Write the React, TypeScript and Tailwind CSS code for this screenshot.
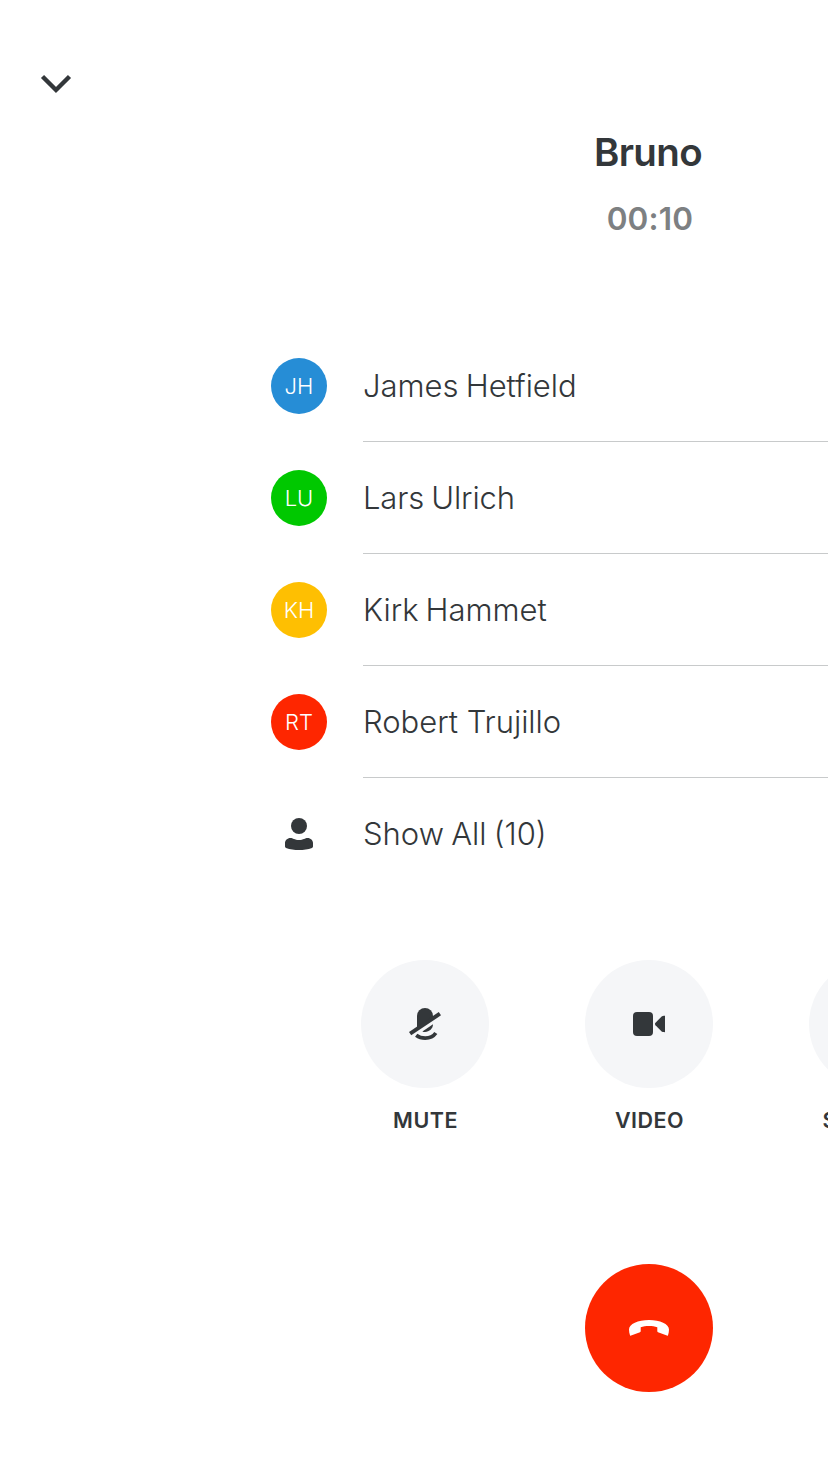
import type { ReactNode } from "react";

const participants = [
  { initials: "JH", name: "James Hetfield", color: "bg-[#268dd6]", spacing: "tracking-[-0.05px] [word-spacing:-1.3px]" },
  { initials: "LU", name: "Lars Ulrich", color: "bg-[#00c800]", spacing: "tracking-[-0.15px] [word-spacing:-1.3px]" },
  { initials: "KH", name: "Kirk Hammet", color: "bg-[#febf02]", spacing: "tracking-[-0.03px] [word-spacing:-1.6px]" },
  { initials: "RT", name: "Robert Trujillo", color: "bg-[#fe2600]", spacing: "tracking-[-0.03px]" },
];

function ChevronDown() {
  return (
    <svg width="32" height="24" viewBox="0 0 32 24" fill="none">
      <path d="M2.5 4.5 16 18 29.5 4.5" stroke="#33373a" strokeWidth="4.4" />
    </svg>
  );
}

function PersonIcon() {
  return (
    <svg width="32" height="32" viewBox="0 0 32 32" fill="#33373a">
      <circle cx="16" cy="8" r="8" />
      <path d="M2 25C2 22.5 4.4 20 7.4 20C10 20 11.5 22 16 22C20.5 22 22 20 24.6 20C27.6 20 30 22.5 30 25V28.6C30 29.2 29.7 29.6 29 29.9C21 32.7 11 32.7 3 29.9C2.3 29.6 2 29.2 2 28.6Z" />
    </svg>
  );
}

function MicOffIcon() {
  return (
    <svg width="32" height="32" viewBox="0 0 32 32" fill="none">
      <path d="M8 21V8a8 8 0 0 1 16 0V10.5Z" fill="#33373a" />
      <path d="M1.1 25.7 30.9 5.7" stroke="#33373a" strokeWidth="4" />
      <path d="M13.4 23.4 24 16.3C24 20.5 20.2 24 16 24 15 24 14.1 23.8 13.4 23.4Z" fill="#33373a" />
      <path d="M7.2 27.2C10 29.3 13 30.1 16.2 30.1C20.6 30.1 24.5 28.3 26.8 25" stroke="#33373a" strokeWidth="3.8" />
    </svg>
  );
}

function VideoIcon() {
  return (
    <svg width="32" height="32" viewBox="0 0 32 32" fill="#33373a">
      <rect x="0" y="4" width="20" height="24" rx="4" />
      <path d="M22.5 14.8 28.4 8.7C29.2 7.9 30.2 7.8 32 7.8V24.2C30.2 24.2 29.2 24.1 28.4 23.3L22.5 17.2Q21.4 16 22.5 14.8Z" />
    </svg>
  );
}

function HangUpIcon() {
  return (
    <svg width="40" height="16" viewBox="0 0 40 16" fill="#fff">
      <path d="M0 9.5C0 4 9 0 20 0S40 4 40 9.5C40 11.5 39.6 13.5 39 15.2Q38.7 16 37.9 15.6L29 12.2Q28.3 11.9 28.3 11.2V7.2C23.5 5.6 16.5 5.6 11.7 7.2V11.2Q11.7 11.9 11 12.2L2.1 15.6Q1.3 16 1 15.2C.4 13.5 0 11.5 0 9.5Z" />
    </svg>
  );
}

function CallAction({ label, children }: { label: string; children?: ReactNode }) {
  return (
    <button className="flex w-32 flex-col items-center">
      <span className="flex size-32 items-center justify-center rounded-full bg-[#f5f6f8]">{children}</span>
      <span className="mt-4 pl-px text-[21.5px] leading-8 font-semibold tracking-[0.5px]">{label}</span>
    </button>
  );
}

export default function App() {
  return (
    <div className="h-[1472px] w-full overflow-hidden bg-white font-['Inter',sans-serif] text-[#33373a]">
      <div className="flex w-[1298px] flex-col">
        <header className="flex h-[129px] items-start px-10 pt-[72px]">
          <button aria-label="Minimize"><ChevronDown /></button>
        </header>
        <div className="flex h-[201px] flex-col items-center">
          <h1 className="pr-0.5 text-[38.5px] leading-[46px] font-semibold tracking-[-0.6px]">Bruno</h1>
          <p className="mt-6 pl-0.5 text-[31.5px] leading-10 font-semibold tracking-[0.2px] text-[#7d8082]">00:10</p>
        </div>
        <ul className="mx-auto w-[756px]">
          {participants.map((p) => (
            <li key={p.initials} className="flex h-28 items-center">
              <span className={`flex size-14 shrink-0 items-center justify-center rounded-full text-[22px] font-light text-white ${p.color}`}>
                {p.initials}
              </span>
              <span className={`ml-9 flex h-28 flex-1 items-center border-b border-[#c8cacb] pt-px text-[31px] font-light ${p.spacing}`}>
                {p.name}
              </span>
            </li>
          ))}
          <li className="flex h-28 items-center">
            <span className="flex size-14 items-center justify-center"><PersonIcon /></span>
            <span className="ml-9 pt-px text-[31px] font-light [word-spacing:-1.5px]">Show All (10)</span>
          </li>
        </ul>
        <div className="mt-[70px] flex justify-center gap-24">
          <CallAction label="MUTE"><MicOffIcon /></CallAction>
          <CallAction label="VIDEO"><VideoIcon /></CallAction>
          <CallAction label="SPEAKER" />
        </div>
        <div className="mt-32 flex justify-center">
          <button aria-label="End call" className="flex size-32 items-center justify-center rounded-full bg-[#fe2600]">
            <HangUpIcon />
          </button>
        </div>
      </div>
    </div>
  );
}
